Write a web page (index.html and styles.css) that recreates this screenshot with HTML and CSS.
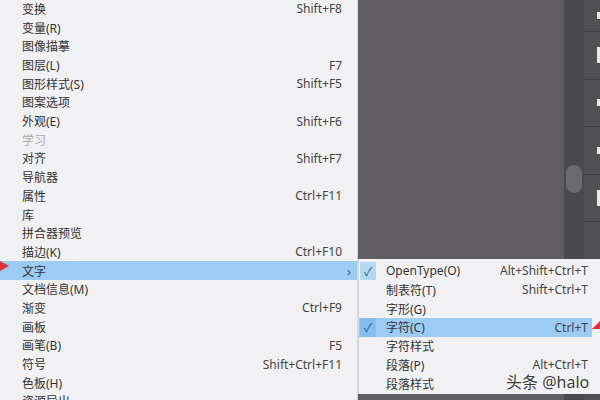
FILE: index.html
```html
<!DOCTYPE html>
<html>
<head>
    <title>窗口菜单</title>
    <link rel="stylesheet" href="styles.css">
</head>
<body>
    <div class="screen">
        <ul class="menu">
            <li class="item"><span>变换</span><span class="key">Shift+F8</span></li>
            <li class="item"><span>变量(R)</span></li>
            <li class="item"><span>图像描摹</span></li>
            <li class="item"><span>图层(L)</span><span class="key">F7</span></li>
            <li class="item"><span>图形样式(S)</span><span class="key">Shift+F5</span></li>
            <li class="item"><span>图案选项</span></li>
            <li class="item"><span>外观(E)</span><span class="key">Shift+F6</span></li>
            <li class="item disabled"><span>学习</span></li>
            <li class="item"><span>对齐</span><span class="key">Shift+F7</span></li>
            <li class="item"><span>导航器</span></li>
            <li class="item"><span>属性</span><span class="key">Ctrl+F11</span></li>
            <li class="item"><span>库</span></li>
            <li class="item"><span>拼合器预览</span></li>
            <li class="item"><span>描边(K)</span><span class="key">Ctrl+F10</span></li>
            <li class="item active"><span>文字</span><span class="arrow">›</span></li>
            <li class="item"><span>文档信息(M)</span></li>
            <li class="item"><span>渐变</span><span class="key">Ctrl+F9</span></li>
            <li class="item"><span>画板</span></li>
            <li class="item"><span>画笔(B)</span><span class="key">F5</span></li>
            <li class="item"><span>符号</span><span class="key">Shift+Ctrl+F11</span></li>
            <li class="item"><span>色板(H)</span></li>
            <li class="item"><span>资源导出</span></li>
        </ul>

        <div class="workspace">
            <div class="canvas"></div>
            <div class="scrollbar"><div class="thumb"></div></div>
            <div class="panel">
                <div class="cell first"><span class="tick"></span></div>
                <div class="cell"><span class="tick tall"></span></div>
                <div class="cell"><span class="tick"></span></div>
                <div class="cell"><span class="tick"></span></div>
                <div class="cell"><span class="tick tall"></span></div>
                <div class="cell"></div>
            </div>
        </div>

        <ul class="submenu">
            <li class="sub-item checked"><span class="check">✓</span><span class="label">OpenType(O)</span><span class="key">Alt+Shift+Ctrl+T</span></li>
            <li class="sub-item"><span class="check"></span><span class="label">制表符(T)</span><span class="key">Shift+Ctrl+T</span></li>
            <li class="sub-item"><span class="check"></span><span class="label">字形(G)</span></li>
            <li class="sub-item checked active"><span class="check">✓</span><span class="label">字符(C)</span><span class="key">Ctrl+T</span></li>
            <li class="sub-item"><span class="check"></span><span class="label">字符样式</span></li>
            <li class="sub-item"><span class="check"></span><span class="label">段落(P)</span><span class="key">Alt+Ctrl+T</span></li>
            <li class="sub-item"><span class="check"></span><span class="label">段落样式</span></li>
        </ul>

        <svg class="marker marker-left" width="10" height="12" viewBox="0 0 10 12">
            <polygon points="0,0 9,5 0,10" fill="#e2323c"/>
        </svg>
        <svg class="marker marker-right" width="9" height="10" viewBox="0 0 9 10">
            <polygon points="0,8 8,0 9,8" fill="#e2323c"/>
        </svg>

        <div class="watermark">头条 @halo</div>
    </div>
</body>
</html>
```

FILE: styles.css
```css
body {
    margin: 0;
    font-family: "Noto Sans", "Noto Sans CJK SC", sans-serif;
    font-size: 12px;
    color: #333;
}
.screen {
    position: relative;
    display: flex;
    width: 600px;
    height: 400px;
    overflow: hidden;
    background: #5f5d60;
}
.menu {
    list-style: none;
    margin: 0;
    padding: 0;
    width: 358px;
    flex: none;
    background: #f1f0f2;
    border-right: 1px solid #d6d5d8;
    box-sizing: border-box;
}
.item {
    display: flex;
    justify-content: space-between;
    align-items: center;
    height: 18.7px;
    padding: 0 15px 0 22px;
    white-space: nowrap;
}
.item:first-child {
    margin-top: -0.4px;
}
.item .key {
    color: #444;
}
.item.disabled {
    color: #a8a8a8;
}
.item.active {
    background: #9ccbf3;
    padding-right: 6px;
}
.arrow {
    color: #555;
    font-size: 13px;
}

.workspace {
    flex: 1;
    display: flex;
}
.canvas {
    flex: 1;
    background: #5f5d60;
}
.scrollbar {
    width: 20px;
    background: #4a494c;
    padding-top: 165px;
    box-sizing: border-box;
}
.thumb {
    width: 16px;
    height: 28px;
    margin: 0 auto;
    border-radius: 8px;
    background: #6b6a6d;
}
.panel {
    width: 16px;
    background: #504f52;
}
.cell {
    height: 47.5px;
    border-bottom: 1px solid #3c3b3e;
    box-sizing: border-box;
    display: flex;
    justify-content: flex-end;
    align-items: center;
}
.cell.first {
    height: 32px;
}
.tick {
    width: 3px;
    height: 7px;
    background: #e8e8e8;
}
.tick.tall {
    height: 16px;
}

.submenu {
    position: absolute;
    left: 358px;
    top: 259px;
    width: 242px;
    height: 135px;
    list-style: none;
    margin: 0;
    padding: 2.6px 0 0;
    box-sizing: border-box;
    background: #f1f0f2;
    border-left: 1px solid #d6d5d8;
}
.sub-item {
    display: flex;
    align-items: center;
    height: 18.8px;
    padding: 0 12px 0 1px;
    white-space: nowrap;
}
.sub-item .check {
    width: 16px;
    height: 100%;
    display: flex;
    align-items: center;
    justify-content: center;
    color: #2f5f9c;
    font-size: 12px;
}
.sub-item.checked .check {
    background: #b5d8f6;
}
.sub-item .label {
    flex: 1;
    margin-left: 10px;
}
.sub-item .key {
    color: #444;
}
.sub-item.active {
    background: #9ccbf3;
    margin-right: 8px;
    padding-right: 4px;
}
.sub-item.active .check {
    background: #85bdf0;
}

.marker {
    position: absolute;
}
.marker-left {
    left: 0;
    top: 261px;
}
.marker-right {
    left: 592px;
    top: 321px;
}
.watermark {
    position: absolute;
    left: 506px;
    top: 369px;
    font-size: 16px;
    color: #3a3a3a;
    text-shadow: 0 0 2px #fff, 0 0 1px #fff;
}
```
